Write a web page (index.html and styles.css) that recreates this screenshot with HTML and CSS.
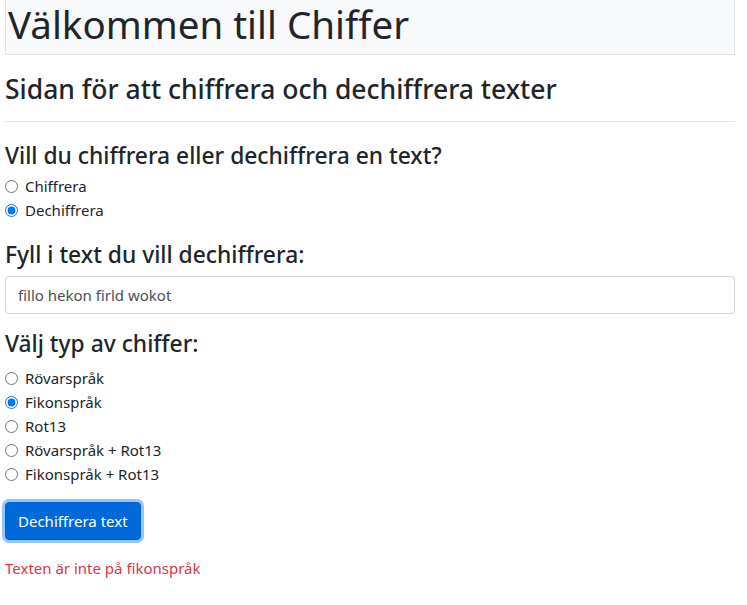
FILE: index.html
```html
<!DOCTYPE html>
<html lang="sv">
<head>
<meta charset="utf-8">
<title>Chiffer</title>
<link rel="stylesheet" href="styles.css">
</head>
<body>
<div class="page">
  <header class="jumbo">
    <h1 class="title">Välkommen till Chiffer</h1>
  </header>
  <h2 class="subtitle">Sidan för att chiffrera och dechiffrera texter</h2>
  <hr class="rule">
  <form class="form">
    <h4 class="q">Vill du chiffrera eller dechiffrera en text?</h4>
    <div class="check"><input class="radio" type="radio" name="mode" id="m1"><label for="m1">Chiffrera</label></div>
    <div class="check"><input class="radio" type="radio" name="mode" id="m2" checked><label for="m2">Dechiffrera</label></div>

    <h4 class="q q-text">Fyll i text du vill dechiffrera:</h4>
    <input class="field" type="text" value="fillo hekon firld wokot">

    <h4 class="q q-type">Välj typ av chiffer:</h4>
    <div class="check"><input class="radio" type="radio" name="c" id="c1"><label for="c1">Rövarspråk</label></div>
    <div class="check"><input class="radio" type="radio" name="c" id="c2" checked><label for="c2">Fikonspråk</label></div>
    <div class="check"><input class="radio" type="radio" name="c" id="c3"><label for="c3">Rot13</label></div>
    <div class="check"><input class="radio" type="radio" name="c" id="c4"><label for="c4">Rövarspråk + Rot13</label></div>
    <div class="check"><input class="radio" type="radio" name="c" id="c5"><label for="c5">Fikonspråk + Rot13</label></div>

    <button class="btn" type="button">Dechiffrera text</button>
  </form>
  <p class="error">Texten är inte på fikonspråk</p>
</div>
</body>
</html>
```

FILE: styles.css
```css
html, body {
  margin: 0;
  padding: 0;
  background: #fff;
}
body {
  font-family: "Noto Sans", "Open Sans", sans-serif;
  font-size: 15px;
  line-height: 24px;
  color: #212529;
}
.page {
  padding: 0 12px 0 5px;
}
.jumbo {
  background: #f8f9fa;
  border: 1px solid #dee2e6;
  border-top: 0;
  height: 55px;
  box-sizing: border-box;
  padding: 0 0 0 2px;
}
.title {
  margin: 0;
  font-size: 38.5px;
  font-weight: 400;
  line-height: 48px;
}
.subtitle {
  margin: 17px 0 0;
  font-size: 26.5px;
  font-weight: 500;
  line-height: 34px;
}
.rule {
  margin: 15px 0 0;
  border: 0;
  border-top: 1px solid rgba(0,0,0,.1);
}
.form {
  margin: 0;
}
.q {
  margin: 20px 0 4px;
  font-size: 22.8px;
  font-weight: 500;
  line-height: 28px;
}
.q-text {
  margin-top: 19px;
}
.q-type {
  margin-top: 16px;
  margin-bottom: 8px;
}
.check {
  display: flex;
  align-items: center;
  height: 24px;
}
.radio {
  margin: 0 7px 0 0;
  width: 13px;
  height: 13px;
}
.field {
  display: block;
  box-sizing: border-box;
  width: 100%;
  height: 38px;
  margin-top: 7px;
  padding: 6px 12px;
  font: inherit;
  color: #495057;
  border: 1px solid #ced4da;
  border-radius: 4px;
  background: #fff;
}
.btn {
  display: block;
  margin-top: 16px;
  height: 38px;
  padding: 0 12px;
  font: inherit;
  color: #fff;
  background: #0069d9;
  border: 1px solid #0062cc;
  border-radius: 4px;
  box-shadow: 0 0 0 3px rgba(38,143,255,.5);
}
.error {
  margin: 16px 0 0;
  color: #dc3545;
}
```
